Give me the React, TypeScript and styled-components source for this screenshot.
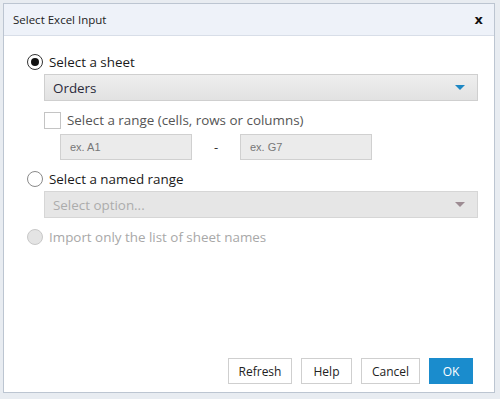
import React from 'react';
import styled, { createGlobalStyle } from 'styled-components';

const GlobalStyle = createGlobalStyle`
    html, body {
        margin: 0;
        padding: 0;
        background: #e8ecf1;
        font-family: "Open Sans", "Noto Sans", "Liberation Sans", sans-serif;
    }
`;

const Backdrop = styled.div`
    width: 500px;
    height: 399px;
    padding: 3px 5px 0 3px;
    box-sizing: border-box;
    background: #e8ecf1;
    overflow: hidden;
`;

const Dialog = styled.div`
    display: flex;
    flex-direction: column;
    width: 492px;
    height: 390px;
    box-sizing: border-box;
    border: 1px solid #bcc5d1;
    background: #ffffff;
`;

const TitleBar = styled.div`
    display: flex;
    align-items: center;
    justify-content: space-between;
    height: 31px;
    padding: 0 11px 0 9px;
    background: #eef2f9;
    border-bottom: 1px solid #d8dee8;
    font-size: 11.5px;
    color: #222;
`;

const Close = styled.span`
    font-family: "DejaVu Sans", sans-serif;
    font-weight: bold;
    font-size: 13px;
    color: #111;
`;

const Body = styled.div`
    display: flex;
    flex-direction: column;
    flex: 1;
    padding: 16px 16px 8px 23px;
`;

const OptionRow = styled.label<{ $disabled?: boolean; $indent?: number }>`
    display: flex;
    align-items: center;
    height: 20px;
    margin-left: ${p => p.$indent || 0}px;
    font-size: 13.4px;
    color: ${p => (p.$disabled ? '#a8a8a8' : '#1a1a1a')};
`;

const Radio = styled.span<{ $checked?: boolean; $disabled?: boolean }>`
    position: relative;
    display: inline-block;
    width: 14px;
    height: 14px;
    margin-right: 6px;
    border-radius: 50%;
    border: 1px solid ${p => (p.$disabled ? '#c8c8c8' : p.$checked ? '#333' : '#8a8a8a')};
    background: ${p => (p.$disabled ? '#e4e4e4' : '#fff')};

    &::after {
        content: '';
        display: ${p => (p.$checked ? 'block' : 'none')};
        position: absolute;
        left: 3px;
        top: 3px;
        width: 8px;
        height: 8px;
        border-radius: 50%;
        background: #111;
    }
`;

const Checkbox = styled.span`
    display: inline-block;
    width: 15px;
    height: 15px;
    margin-right: 6px;
    border: 1px solid #c4c4c4;
    background: #fff;
`;

const RangeLabel = styled.span`
    color: #555;
`;

const Select = styled.div<{ $disabled?: boolean }>`
    display: flex;
    align-items: center;
    justify-content: space-between;
    height: 27px;
    box-sizing: border-box;
    margin: 2px 0 0 17px;
    padding: 0 12px 0 8px;
    border: 1px solid ${p => (p.$disabled ? '#d6d6d6' : '#cfcfcf')};
    background: ${p => (p.$disabled ? '#e6e6e6' : 'linear-gradient(#eeeeee, #e2e2e2)')};
    font-size: 13.4px;
    color: ${p => (p.$disabled ? '#acacac' : '#2a2a3a')};
`;

const Caret = styled.span<{ $disabled?: boolean }>`
    width: 0;
    height: 0;
    border-left: 5px solid transparent;
    border-right: 5px solid transparent;
    border-top: 5px solid ${p => (p.$disabled ? '#9d8c93' : '#1e88c4')};
`;

const RangeInputs = styled.div`
    display: flex;
    align-items: center;
    margin: 4px 0 0 33px;
`;

const Field = styled.div`
    display: flex;
    align-items: center;
    width: 132px;
    height: 26px;
    box-sizing: border-box;
    padding-left: 9px;
    border: 1px solid #d0d0d0;
    background: #ebebeb;
    font-family: "Liberation Sans", Arial, sans-serif;
    font-size: 11px;
    color: #777;
`;

const Dash = styled.span`
    width: 48px;
    text-align: center;
    font-size: 13px;
    color: #333;
`;

const Spacer = styled.div<{ $h: number }>`
    height: ${p => p.$h}px;
`;

const Footer = styled.div`
    display: flex;
    justify-content: flex-end;
    gap: 9px;
    margin-top: auto;
    padding-right: 5px;
`;

const Button = styled.button<{ $primary?: boolean; $w: number }>`
    width: ${p => p.$w}px;
    height: 26px;
    padding: 0;
    border: 1px solid ${p => (p.$primary ? '#1a8ccd' : '#cfcfcf')};
    background: ${p => (p.$primary ? '#1a8ccd' : '#fff')};
    color: ${p => (p.$primary ? '#fff' : '#222')};
    font-family: "Open Sans", "Noto Sans", sans-serif;
    font-size: 12px;
`;

const App = () => {
    return (
        <>
            <GlobalStyle />
            <Backdrop>
                <Dialog>
                    <TitleBar>
                        <span>Select Excel Input</span>
                        <Close>x</Close>
                    </TitleBar>
                    <Body>
                        <OptionRow>
                            <Radio $checked />
                            Select a sheet
                        </OptionRow>
                        <Select>
                            <span>Orders</span>
                            <Caret />
                        </Select>
                        <Spacer $h={9} />
                        <OptionRow $indent={17}>
                            <Checkbox />
                            <RangeLabel>Select a range (cells, rows or columns)</RangeLabel>
                        </OptionRow>
                        <RangeInputs>
                            <Field>ex. A1</Field>
                            <Dash>-</Dash>
                            <Field>ex. G7</Field>
                        </RangeInputs>
                        <Spacer $h={9} />
                        <OptionRow>
                            <Radio />
                            Select a named range
                        </OptionRow>
                        <Select $disabled>
                            <span>Select option...</span>
                            <Caret $disabled />
                        </Select>
                        <Spacer $h={9} />
                        <OptionRow $disabled>
                            <Radio $disabled />
                            Import only the list of sheet names
                        </OptionRow>
                        <Footer>
                            <Button $w={64}>Refresh</Button>
                            <Button $w={51}>Help</Button>
                            <Button $w={59}>Cancel</Button>
                            <Button $w={44} $primary>OK</Button>
                        </Footer>
                    </Body>
                </Dialog>
            </Backdrop>
        </>
    );
};

export default App;
